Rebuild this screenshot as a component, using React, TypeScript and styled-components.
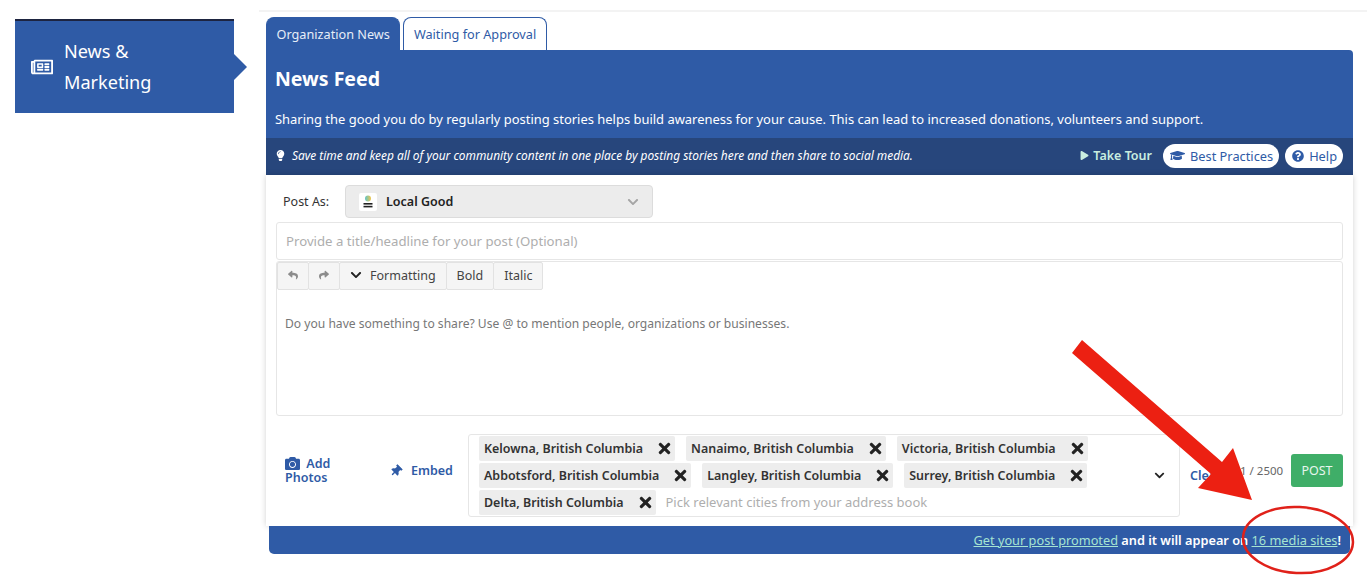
import styled, {createGlobalStyle} from "styled-components";
import {
    FaCamera, FaChevronDown, FaGraduationCap, FaLightbulb, FaPlay, FaQuestionCircle,
    FaRegNewspaper, FaReply, FaShare, FaThumbtack, FaTimes
} from "react-icons/fa";

const cities = [
    "Kelowna, British Columbia",
    "Nanaimo, British Columbia",
    "Victoria, British Columbia",
    "Abbotsford, British Columbia",
    "Langley, British Columbia",
    "Surrey, British Columbia",
    "Delta, British Columbia",
];

export default function App() {
    return <Page>
        <GlobalStyle/>
        <Sidebar>
            <SideItem>
                <FaRegNewspaper size={22}/>
                <SideLabel>News &amp; Marketing</SideLabel>
            </SideItem>
        </Sidebar>
        <Main>
            <Tabs>
                <Tab $active>Organization News</Tab>
                <Tab>Waiting for Approval</Tab>
            </Tabs>
            <Header>
                <Title>News Feed</Title>
                <Intro>Sharing the good you do by regularly posting stories helps build awareness for your cause. This can lead to increased donations, volunteers and support.</Intro>
                <TipBar>
                    <FaLightbulb size={11}/>
                    <TipText>Save time and keep all of your community content in one place by posting stories here and then share to social media.</TipText>
                    <TourLink><FaPlay size={9}/> Take Tour</TourLink>
                    <PillButton><FaGraduationCap size={15}/> Best Practices</PillButton>
                    <PillButton><FaQuestionCircle size={12}/> Help</PillButton>
                </TipBar>
            </Header>
            <Card>
                <PostAsRow>
                    <PostAsLabel>Post As:</PostAsLabel>
                    <OrgSelect>
                        <OrgLogo viewBox="0 0 18 18">
                            <defs>
                                <linearGradient id="logoBlob" x1="0" y1="0" x2="1" y2="0">
                                    <stop offset="0" stopColor="#5cc4c8"/>
                                    <stop offset="1" stopColor="#f0c64e"/>
                                </linearGradient>
                            </defs>
                            <rect width="18" height="18" rx="2" fill="#fff"/>
                            <circle cx="9" cy="5.5" r="3" fill="url(#logoBlob)"/>
                            <rect x="4.5" y="10" width="9" height="1.6" fill="#222"/>
                            <rect x="4.5" y="12.8" width="9" height="1.6" fill="#222"/>
                        </OrgLogo>
                        <OrgName>Local Good</OrgName>
                        <FaChevronDown size={12} color="#a5a5a5"/>
                    </OrgSelect>
                </PostAsRow>
                <TitleInput>Provide a title/headline for your post (Optional)</TitleInput>
                <Editor>
                    <Toolbar>
                        <ToolButton $icon><FaReply size={10} color="#8c8c8c"/></ToolButton>
                        <ToolButton $icon><FaShare size={10} color="#8c8c8c"/></ToolButton>
                        <ToolButton><FaChevronDown size={12} color="#222"/> Formatting</ToolButton>
                        <ToolButton>Bold</ToolButton>
                        <ToolButton>Italic</ToolButton>
                    </Toolbar>
                    <EditorHint>Do you have something to share? Use @ to mention people, organizations or businesses.</EditorHint>
                </Editor>
                <BottomRow>
                    <AddPhotos><FaCamera size={15}/> Add Photos</AddPhotos>
                    <Embed><PinIcon size={12}/> Embed</Embed>
                    <CityBox>
                        <Chips>
                            {cities.map(city => <Chip key={city}>{city}<FaTimes size={17} color="#222"/></Chip>)}
                            <CityHint>Pick relevant cities from your address book</CityHint>
                        </Chips>
                        <FaChevronDown size={11} color="#222"/>
                    </CityBox>
                    <ClearLink>Clear</ClearLink>
                    <Counter>1 / 2500</Counter>
                    <PostButton>POST</PostButton>
                </BottomRow>
            </Card>
            <PromoBar>
                <PromoLink>Get your post promoted</PromoLink>&nbsp;and it will appear on&nbsp;<PromoLink>16 media sites</PromoLink>!
            </PromoBar>
        </Main>
        <Annotation viewBox="0 0 1367 584">
            <polygon points="1082,340 1072,353 1211,474 1198,488 1252,500 1233,448 1222,462" fill="#ec2012"/>
            <ellipse cx="1298" cy="540" rx="55" ry="33" fill="none" stroke="#e0211a" strokeWidth="2.5" transform="rotate(3 1298 540)"/>
        </Annotation>
    </Page>
}

const GlobalStyle = createGlobalStyle`
    html, body {
        margin: 0;
        background: #fff;
    }
    body {
        font-family: "Noto Sans", "Open Sans", sans-serif;
        color: #333;
    }
`

const Page = styled.div`
    position: relative;
    width: 1367px;
    height: 584px;
    overflow: hidden;
    display: flex;
    align-items: flex-start;
    padding: 19px 14px 0 15px;
    box-sizing: border-box;
`

const Sidebar = styled.nav`
    flex: 0 0 219px;
    margin-right: 32px;
`

const SideItem = styled.div`
    position: relative;
    height: 94px;
    box-sizing: border-box;
    border-top: 2px solid #1d2440;
    background: #2f5ba6;
    color: #fff;
    display: flex;
    align-items: center;
    gap: 11px;
    padding: 0 16px;

    &::after {
        content: "";
        position: absolute;
        left: 100%;
        top: 33px;
        border-left: 13px solid #2f5ba6;
        border-top: 13px solid transparent;
        border-bottom: 13px solid transparent;
    }
`

const SideLabel = styled.span`
    width: 110px;
    font-size: 18.1px;
    line-height: 31px;
`

const Main = styled.main`
    position: relative;
    flex: 1;
    min-width: 0;
    margin-top: -2px;
    display: flex;
    flex-direction: column;
    align-items: stretch;

    &::before {
        content: "";
        position: absolute;
        top: -7px;
        left: -7px;
        right: -14px;
        height: 2px;
        background: #f3f3f3;
    }
`

const Tabs = styled.div`
    display: flex;
    gap: 3px;
`

const Tab = styled.div<{$active?: boolean}>`
    height: 33px;
    box-sizing: border-box;
    padding: 0 9.5px;
    display: flex;
    align-items: center;
    font-size: 12.7px;
    border: 1.5px solid #2f5ba6;
    border-bottom: none;
    border-radius: 8px 8px 0 0;
    background: ${p => p.$active ? "#2f5ba6" : "#fff"};
    color: ${p => p.$active ? "#e6edf7" : "#2f5ba6"};
`

const Header = styled.header`
    height: 125px;
    box-sizing: border-box;
    background: #2f5ba6;
    border-radius: 0 4px 0 0;
    color: #fff;
    display: flex;
    flex-direction: column;
`

const Title = styled.h1`
    margin: 0;
    padding: 14px 9px 0;
    height: 45px;
    box-sizing: border-box;
    font-size: 19.5px;
    line-height: 30px;
    font-weight: 700;
`

const Intro = styled.p`
    margin: 0;
    padding: 0 9px;
    height: 43px;
    font-size: 12.94px;
    line-height: 48px;
    white-space: nowrap;
`

const TipBar = styled.div`
    flex: 1;
    background: #27467c;
    display: flex;
    align-items: center;
    gap: 6px;
    padding: 0 10px 2px 9px;
`

const TipText = styled.span`
    flex: 1;
    margin-bottom: 2px;
    font-size: 11.9px;
    font-style: italic;
    white-space: nowrap;
`

const TourLink = styled.span`
    display: flex;
    align-items: center;
    gap: 4px;
    margin-right: 5px;
    font-weight: 600;
    font-size: 12.5px;
    color: #c9eee0;
`

const PillButton = styled.span`
    height: 24px;
    box-sizing: border-box;
    padding: 0 6px 0 7px;
    display: flex;
    align-items: center;
    gap: 5px;
    background: #fff;
    color: #2f5ba6;
    border-radius: 12px;
    font-size: 12.8px;
`

const Card = styled.section`
    height: 351px;
    box-sizing: border-box;
    background: #fff;
    padding: 10px 10px 0;
    box-shadow: 0 0 6px rgba(0, 0, 0, .18);
    display: flex;
    flex-direction: column;
`

const PostAsRow = styled.div`
    display: flex;
    align-items: center;
    height: 33px;
    padding-left: 7px;
    gap: 11px;
    margin-bottom: 4px;
`

const PostAsLabel = styled.span`
    width: 51px;
    font-size: 12.5px;
    color: #333;
`

const OrgSelect = styled.div`
    width: 308px;
    height: 33px;
    box-sizing: border-box;
    background: #ececec;
    border: 1px solid #dcdcdc;
    border-radius: 4px;
    display: flex;
    align-items: center;
    gap: 9px;
    padding: 0 13px;
`

const OrgLogo = styled.svg`
    width: 18px;
    height: 18px;
`

const OrgName = styled.span`
    flex: 1;
    font-size: 12.5px;
    font-weight: 600;
    color: #222;
`

const TitleInput = styled.div`
    height: 38px;
    box-sizing: border-box;
    border: 1px solid #e6e6e6;
    border-radius: 3px;
    padding: 0 9px;
    display: flex;
    align-items: center;
    font-size: 13.2px;
    color: #aeaeae;
    margin-bottom: 1px;
`

const Editor = styled.div`
    height: 155px;
    box-sizing: border-box;
    border: 1px solid #e6e6e6;
    border-radius: 3px;
`

const Toolbar = styled.div`
    display: flex;
`

const ToolButton = styled.span<{$icon?: boolean}>`
    height: 28px;
    box-sizing: border-box;
    width: ${p => p.$icon ? "32px" : "auto"};
    padding: ${p => p.$icon ? "0 0 2px" : "0 10px 2px"};
    display: flex;
    align-items: center;
    justify-content: center;
    gap: 8px;
    background: #f5f5f5;
    border: 1px solid #e2e2e2;
    margin-right: -1px;
    font-size: 12.5px;
    color: #444;
    border-radius: 2px;
`

const EditorHint = styled.p`
    margin: 0;
    padding: 26px 8px 0;
    font-size: 12.1px;
    line-height: 16px;
    color: #777;
`

const BottomRow = styled.div`
    margin-top: 18px;
    height: 83px;
    display: flex;
    align-items: center;
    padding-left: 9px;
    color: #2f5ba6;
    font-size: 12.5px;
    font-weight: 600;
`

const AddPhotos = styled.span`
    width: 105px;
    box-sizing: border-box;
    padding-right: 44px;
    margin-bottom: 10px;
    line-height: 14px;

    svg {
        vertical-align: -3px;
        margin-right: 3px;
    }
`

const Embed = styled.span`
    width: 78px;
    display: flex;
    align-items: center;
    gap: 9px;
    margin-bottom: 10px;
`

const PinIcon = styled(FaThumbtack)`
    transform: rotate(45deg);
`

const CityBox = styled.div`
    width: 712px;
    height: 83px;
    box-sizing: border-box;
    border: 1px solid #e6e6e6;
    border-radius: 3px;
    padding: 0 14px 1px 10px;
    display: flex;
    align-items: center;
`

const Chips = styled.div`
    flex: 1;
    display: flex;
    flex-wrap: wrap;
    column-gap: 11px;
    row-gap: 2px;
`

const Chip = styled.span`
    height: 25px;
    box-sizing: border-box;
    background: #ededed;
    border-radius: 2px;
    padding: 0 2px 0 5px;
    display: flex;
    align-items: center;
    gap: 13px;
    font-size: 12.45px;
    font-weight: 600;
    color: #333;
    white-space: nowrap;
`

const CityHint = styled.span`
    display: flex;
    align-items: center;
    margin-left: -1px;
    font-size: 13px;
    font-weight: 400;
    color: #aeaeae;
`

const ClearLink = styled.span`
    margin-left: 10px;
    width: 50px;
`

const Counter = styled.span`
    width: 42px;
    margin-right: 9px;
    margin-bottom: 10px;
    font-size: 11.5px;
    font-weight: 400;
    color: #666;
    white-space: nowrap;
`

const PostButton = styled.span`
    width: 52px;
    height: 33px;
    margin-bottom: 10px;
    background: #3fae68;
    border-radius: 3px;
    color: #e8f6ee;
    font-size: 12.5px;
    font-weight: 400;
    display: flex;
    align-items: center;
    justify-content: center;
`

const PromoBar = styled.footer`
    margin: 0 3px;
    height: 28px;
    background: #2f5ba6;
    border-radius: 0 0 5px 5px;
    padding-right: 9px;
    display: flex;
    align-items: center;
    justify-content: flex-end;
    color: #fff;
    font-size: 12.75px;
    font-weight: 600;
`

const PromoLink = styled.a`
    color: #a6e4d2;
    font-weight: 400;
    text-decoration: underline;
`

const Annotation = styled.svg`
    position: absolute;
    inset: 0;
    width: 1367px;
    height: 584px;
    pointer-events: none;
`
